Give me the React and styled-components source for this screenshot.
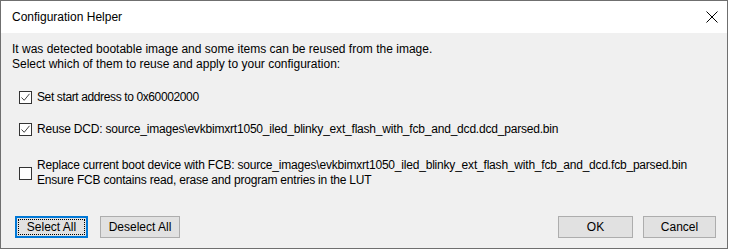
import React from 'react'
import styled, { createGlobalStyle } from 'styled-components'

const GlobalStyle = createGlobalStyle`
  html, body {
    margin: 0;
    padding: 0;
    background: #ffffff;
  }
  body {
    font-family: "Segoe UI", "Liberation Sans", Arial, sans-serif;
    font-size: 12px;
    color: #000;
  }
`

const Window = styled.div`
  width: 726px;
  height: 247px;
  border: 1px solid #6f6f6f;
  background: #f0f0f0;
  display: flex;
  flex-direction: column;
`

const TitleBar = styled.div`
  height: 32px;
  background: #ffffff;
  display: flex;
  align-items: center;
  justify-content: space-between;
  padding: 0 9px 0 11px;
`

const Title = styled.span`
  font-size: 12px;
  line-height: 15px;
  padding-top: 1px;
`

const CloseButton = styled.span`
  width: 12px;
  height: 12px;
  display: flex;
  svg {
    display: block;
  }
`

const Body = styled.div`
  flex: 1;
  display: flex;
  flex-direction: column;
  padding: 9px 11px 10px 11px;
`

const Intro = styled.p`
  margin: 0;
  line-height: 15px;
`

const OptionRow = styled.label`
  display: flex;
  align-items: center;
  gap: 5px;
  margin-top: ${p => p.$gap}px;
  padding-left: 7px;
  line-height: 15px;
`

const Box = styled.span`
  width: 11px;
  height: 11px;
  flex-shrink: 0;
  border: 1px solid #333333;
  background: #ffffff;
  display: flex;
  align-items: center;
  justify-content: center;
`

const OptionText = styled.span`
  white-space: nowrap;
  letter-spacing: ${p => p.$tight}px;
`

const ButtonRow = styled.div`
  margin-top: auto;
  display: flex;
  align-items: center;
  padding: 0 0 0 3px;
`

const Group = styled.div`
  display: flex;
  gap: ${p => p.$gap}px;
  margin-left: ${p => (p.$right ? 'auto' : '0')};
`

const Button = styled.button`
  box-sizing: border-box;
  width: ${p => p.$w}px;
  height: 22px;
  font-family: inherit;
  font-size: 12px;
  color: #000;
  background: #e1e1e1;
  border: ${p => (p.$focused ? '2px solid #0078d7' : '1px solid #adadad')};
  padding: 0;
  position: relative;
  cursor: default;
  &::after {
    content: '';
    display: ${p => (p.$focused ? 'block' : 'none')};
    position: absolute;
    inset: 1px;
    border: 1px dotted #000;
  }
`

const Check = () => (
  <svg width="11" height="11" viewBox="0 0 11 11">
    <path d="M1.5 5.5 L4.2 8.3 L9.5 1.8" fill="none" stroke="#444" strokeWidth="1" />
  </svg>
)

const Option = ({ checked, gap, tight = -0.2, children }) => (
  <OptionRow $gap={gap}>
    <Box>{checked && <Check />}</Box>
    <OptionText $tight={tight}>{children}</OptionText>
  </OptionRow>
)

const App = () => (
  <>
    <GlobalStyle />
    <Window>
      <TitleBar>
        <Title>Configuration Helper</Title>
        <CloseButton>
          <svg width="12" height="12" viewBox="0 0 12 12">
            <path d="M0.5 0.5 L11.5 11.5 M11.5 0.5 L0.5 11.5" stroke="#000" strokeWidth="1" />
          </svg>
        </CloseButton>
      </TitleBar>
      <Body>
        <Intro>
          It was detected bootable image and some items can be reused from the image.
          <br />
          Select which of them to reuse and apply to your configuration:
        </Intro>
        <Option checked gap={18} tight={-0.38}>Set start address to 0x60002000</Option>
        <Option checked gap={17}>
          Reuse DCD: source_images\evkbimxrt1050_iled_blinky_ext_flash_with_fcb_and_dcd.dcd_parsed.bin
        </Option>
        <Option gap={21}>
          Replace current boot device with FCB: source_images\evkbimxrt1050_iled_blinky_ext_flash_with_fcb_and_dcd.fcb_parsed.bin
          <br />
          Ensure FCB contains read, erase and program entries in the LUT
        </Option>
        <ButtonRow>
          <Group $gap={12}>
            <Button $w={73} $focused>Select All</Button>
            <Button $w={80}>Deselect All</Button>
          </Group>
          <Group $gap={10} $right>
            <Button $w={75}>OK</Button>
            <Button $w={73}>Cancel</Button>
          </Group>
        </ButtonRow>
      </Body>
    </Window>
  </>
)

export default App
